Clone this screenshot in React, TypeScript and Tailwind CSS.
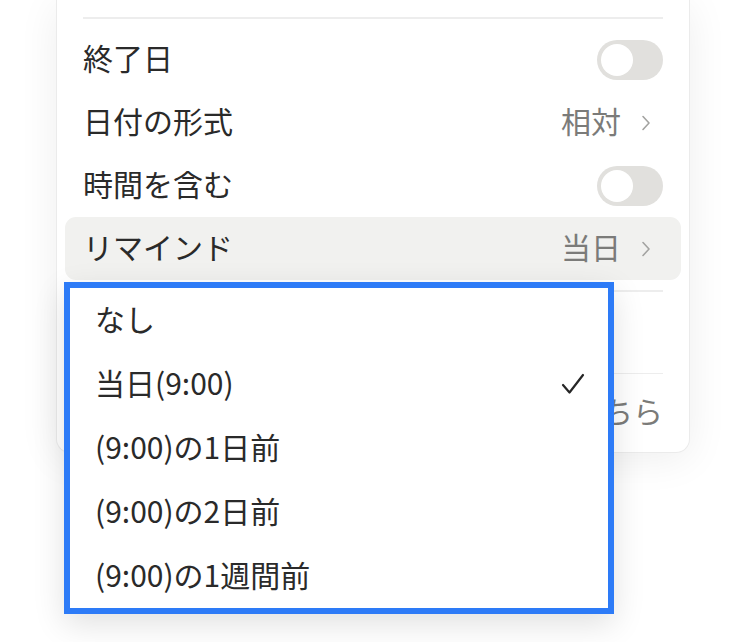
import React from "react";

const FONT = { fontFamily: '"Noto Sans CJK JP", "Liberation Sans", sans-serif' };

const REMIND_OPTIONS = [
  { label: "なし", checked: false },
  { label: "当日(9:00)", checked: true },
  { label: "(9:00)の1日前", checked: false },
  { label: "(9:00)の2日前", checked: false },
  { label: "(9:00)の1週間前", checked: false },
];

function Toggle() {
  return (
    <div className="flex h-[40px] w-[66px] items-center rounded-full bg-[#e1e0dd] px-[4px]">
      <div className="h-[32px] w-[32px] rounded-full bg-white" />
    </div>
  );
}

function Chevron() {
  return (
    <svg width="10" height="16" viewBox="0 0 10 16" fill="none" className="ml-[20px]">
      <path d="M2 1.5 L8 8 L2 14.5" stroke="#a3a3a1" strokeWidth="1.6" strokeLinecap="round" strokeLinejoin="round" />
    </svg>
  );
}

function Check() {
  return (
    <svg width="24" height="22" viewBox="0 0 24 22" fill="none">
      <path d="M2 12 L8.5 19.5 L22 2" stroke="#262626" strokeWidth="2.2" strokeLinecap="round" strokeLinejoin="round" />
    </svg>
  );
}

function Row({ label, right, active }: { label: string; right: React.ReactNode; active?: boolean }) {
  return (
    <div
      className={`flex h-[63px] items-center justify-between rounded-[11px] pl-[18px] pr-[18px] ${
        active ? "bg-[#f1f1ef]" : ""
      }`}
    >
      <span className="pb-[4px] text-[30px] text-[#2a2a2a]">{label}</span>
      {right}
    </div>
  );
}

function Value({ text }: { text: string }) {
  return (
    <div className="flex items-center pr-[12px]">
      <span className="pb-[4px] text-[30px] text-[#7b7b79]">{text}</span>
      <Chevron />
    </div>
  );
}

export default function App() {
  return (
    <div className="relative h-[642px] w-[754px] overflow-hidden bg-white" style={FONT}>
      {/* Settings panel */}
      <div className="relative ml-[56px] w-[634px] rounded-b-[14px] border-x border-b border-[#ebebeb] bg-white px-[8px] pt-[17px] shadow-[0_6px_40px_rgba(0,0,0,0.07)]">
        <div className="mx-[18px] h-[2px] bg-[#ededed]" />
        <div className="pt-[9px]">
          <Row label="終了日" right={<Toggle />} />
          <Row label="日付の形式" right={<Value text="相対" />} />
          <Row label="時間を含む" right={<Toggle />} />
          <Row label="リマインド" right={<Value text="当日" />} active />
        </div>
        <div className="mx-[18px] mt-[10px] h-[1.5px] bg-[#ededed]" />
        <div className="h-[81px]" />
        <div className="mx-[18px] h-[1.5px] bg-[#ededed]" />
        <div className="flex h-[78px] items-center justify-end pr-[18px]">
          <span className="pb-[6px] text-[30px] text-[#7b7b79]">こちら</span>
        </div>

        {/* Reminder dropdown */}
        <div className="absolute left-[7px] top-[282px] z-10 w-[550px] border-[6px] border-[#2d7bf7] bg-white shadow-[0_10px_30px_rgba(0,0,0,0.12)]">
          {REMIND_OPTIONS.map((opt) => (
            <div key={opt.label} className="flex h-[64px] items-center justify-between pl-[25px] pr-[23px]">
              <span className="pb-[4px] text-[30px] text-[#2a2a2a]">{opt.label}</span>
              {opt.checked && <Check />}
            </div>
          ))}
        </div>
      </div>
    </div>
  );
}
